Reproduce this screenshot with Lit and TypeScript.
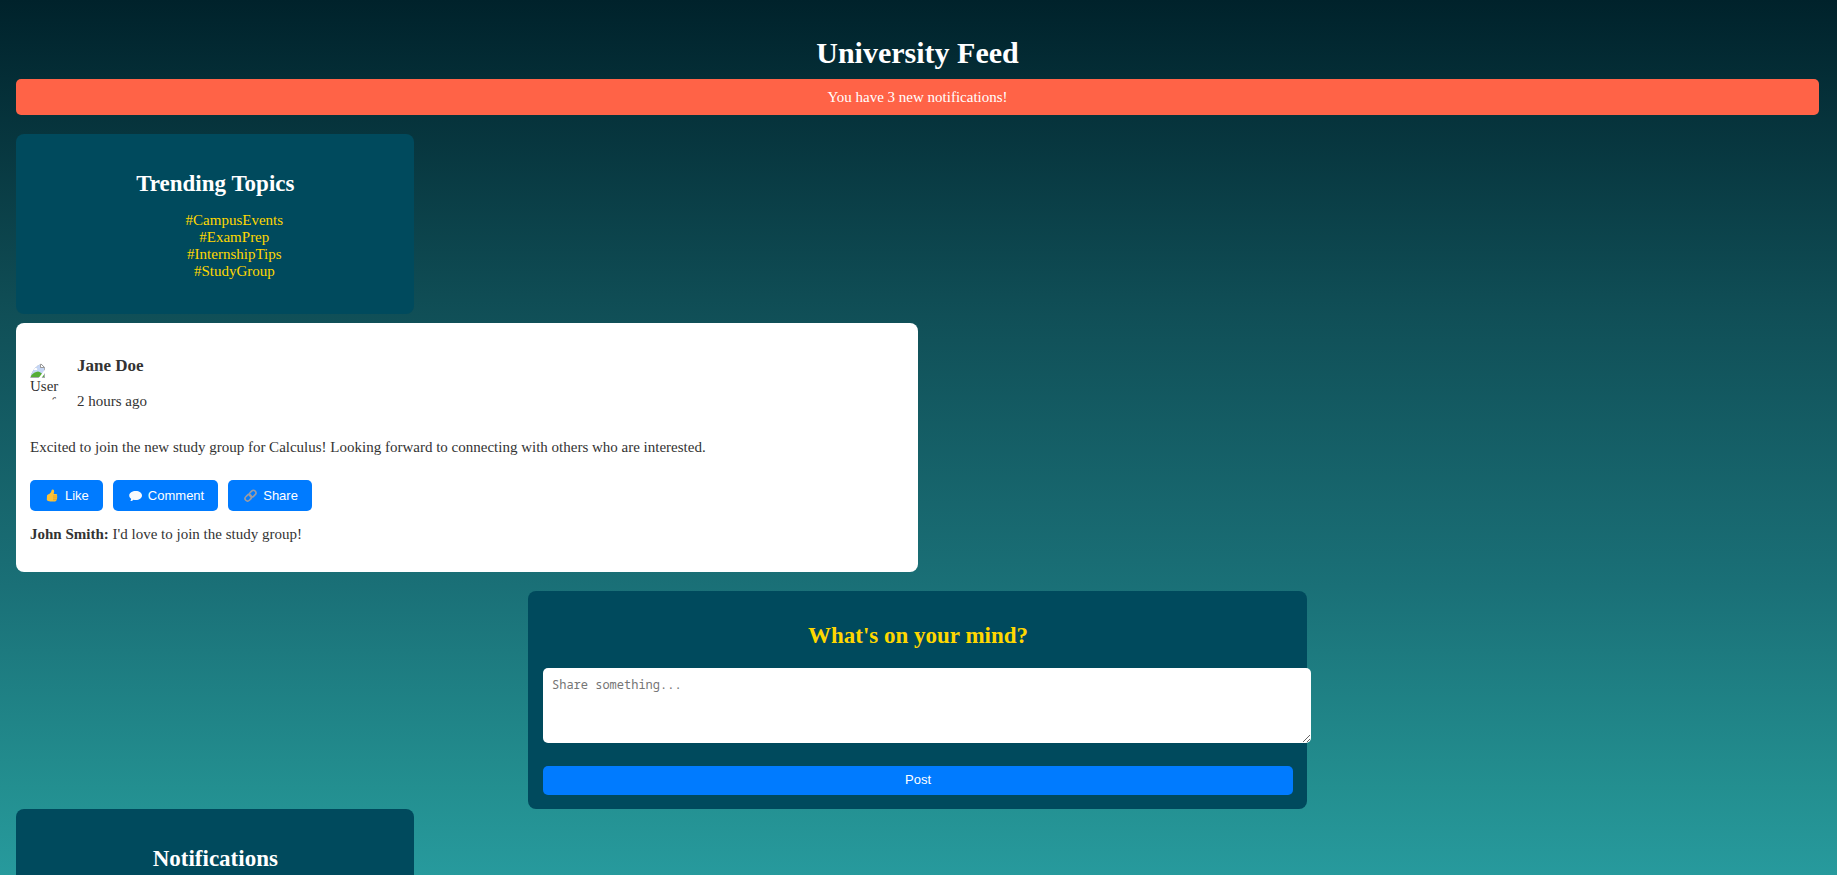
import { LitElement, html, css, svg } from "lit";
import { customElement } from "lit/decorators.js";

const thumbIcon = svg`
  <path d="M1 6.6 C1.8 5.6 3 5.2 3.8 4.6 C5 3.6 5.4 2.2 5.6 1.2 C5.8 .2 7.6 .2 8 1.6 C8.4 2.8 8 4 7.7 5 L10 5 C11.4 5.1 11.5 6.5 10.8 6.9 C11.6 7.4 11.5 8.6 10.8 8.8 C11.4 9.5 11.1 10.5 10.4 10.7 C10.7 11.6 10 12.4 8.8 12.4 L4.4 12.4 C2.8 12.4 1 11.8 .8 10.8 Z" fill="#fcc236"/>
  <path d="M7 7 H10.8 M7 8.9 H10.8 M7 10.7 H10.3" stroke="#d98f1c" stroke-width=".6" fill="none"/>
`;
const bubbleIcon = svg`
  <path d="M6.8 2 C10.3 2 13 3.9 13 6.5 C13 9.1 10.3 11 6.8 11 C6 11 5.2 10.9 4.5 10.7 C3.7 11.6 2.5 12.2 1.3 12.1 C1.9 11.4 2.2 10.6 2.1 9.7 C.9 8.9 .2 7.8 .2 6.5 C.2 3.9 3.3 2 6.8 2 Z" fill="#f8fafc"/>
`;
const linkIcon = svg`
  <g fill="none" stroke="#9b9ca3" stroke-width="1.6">
    <rect x="5.2" y="2.1" width="7" height="5" rx="2.5" transform="rotate(-45 8.7 4.6)"/>
    <rect x=".8" y="6.3" width="7" height="5" rx="2.5" transform="rotate(-45 4.3 8.8)"/>
  </g>
`;

@customElement("app-root")
export class AppRoot extends LitElement {
  static styles = css`
    :host {
      display: block;
      box-sizing: border-box;
      height: 100vh;
      padding: 36px 18px 0 16px;
      overflow-y: auto;
      scrollbar-width: none;
      background: linear-gradient(#00222b 0%, #104f57 36%, #1a7077 67%, #238f90 90%, #279a9d 100%);
      color: #fff;
      font: 15px/17px "Liberation Serif", "Times New Roman", serif;
      text-align: center;
    }
    h1, h2, h3, p, ul { margin: 0; }
    h1 { font-size: 30px; line-height: 34px; margin-bottom: 9px; }
    h2 { font-size: 23px; line-height: 26px; margin: 18px 0 15px; }
    h3 { font-size: 17px; line-height: 20px; }
    button {
      border: 0;
      border-radius: 5px;
      background: #007bff;
      color: #fff;
      font: 13px/15px "Liberation Sans", Arial, sans-serif;
      cursor: pointer;
    }
    .banner {
      padding: 9px;
      border-radius: 5px;
      background: #ff6347;
      line-height: 18px;
    }
    .panel {
      display: flow-root;
      width: 20%;
      padding: 19px 18px 19px 19px;
      border-radius: 8px;
      background: #004a5d;
    }
    .trending { margin-top: 19px; }
    .topics {
      padding-left: 38px;
      margin-bottom: 15px;
      list-style: none;
    }
    .topics a { color: #ffd700; text-decoration: none; }
    .post {
      box-sizing: border-box;
      width: 50%;
      margin-top: 9px;
      padding: 14px 14px 29px;
      border-radius: 8px;
      background: #fff;
      color: #333;
      text-align: left;
    }
    .author {
      display: flex;
      align-items: center;
      gap: 9px;
      margin-bottom: 14px;
    }
    .author-text {
      display: grid;
      gap: 17px;
      padding: 19px 0 15px;
    }
    .avatar {
      width: 38px;
      height: 38px;
      overflow: hidden;
      border-radius: 50%;
    }
    .avatar svg { display: block; }
    .actions {
      display: flex;
      gap: 10px;
      margin: 24px 0 15px;
    }
    .actions button {
      display: flex;
      align-items: center;
      gap: 6px;
      padding: 8px 14px 8px 16px;
    }
    .composer {
      display: flow-root;
      box-sizing: border-box;
      max-width: 779px;
      margin: 19px auto 0;
      padding: 14px 14px 14px 15px;
      border-radius: 8px;
      background: #004a5d;
    }
    .composer h2 { margin-bottom: 19px; color: #ffd700; }
    .composer textarea {
      display: block;
      width: 100%;
      height: 57px;
      margin-bottom: 23px;
      padding: 9px;
      border: 0;
      border-radius: 5px;
      background: #fff;
      font: 12px/15px "Noto Sans Mono", "DejaVu Sans Mono", monospace;
    }
    .composer textarea::placeholder { color: #757575; }
    .composer button {
      display: block;
      width: 100%;
      padding: 6px 9px 8px;
    }
  `;

  private topics = ["#CampusEvents", "#ExamPrep", "#InternshipTips", "#StudyGroup"];
  private actions = [
    { label: "Like", icon: thumbIcon },
    { label: "Comment", icon: bubbleIcon },
    { label: "Share", icon: linkIcon },
  ];

  render() {
    return html`
      <h1>University Feed</h1>
      <div class="banner" role="status">You have 3 new notifications!</div>

      <section class="panel trending">
        <h2>Trending Topics</h2>
        <ul class="topics">
          ${this.topics.map((t) => html`<li><a href="#">${t}</a></li>`)}
        </ul>
      </section>

      <article class="post">
        <header class="author">
          <div class="avatar">
            <svg width="15" height="16" viewBox="0 0 15 16" aria-hidden="true">
              <path d="M0 1 H10.5 L15 5.5 V16 H0 Z" fill="#a6aab0"/>
              <path d="M1 2 H10 V6 H14 V15 H1 Z" fill="#c5d6f5"/>
              <path d="M10.5 1.5 V5.5 H14.5 Z" fill="#fff" stroke="#999" stroke-width="1"/>
              <path d="M3 7 C3.2 5.4 5 5 5.8 6 C7.2 5.8 7.8 7.5 6.8 8 H3.4 Z" fill="#fff"/>
              <path d="M1 15 V13.8 C3 11.4 5.4 9.8 8 9.6 C10 9.8 12.5 12 14 13.4 V15 Z" fill="#56ad36"/>
              <path d="M8.6 16 L15 7.6 V11 L11.6 16 Z" fill="#fff"/>
            </svg>
            User Profile
          </div>
          <div class="author-text">
            <h3>Jane Doe</h3>
            <p>2 hours ago</p>
          </div>
        </header>
        <p>Excited to join the new study group for Calculus! Looking forward to connecting with others who are interested.</p>
        <div class="actions">
          ${this.actions.map(
            (a) => html`<button type="button">
              <svg width="13" height="13" viewBox="0 0 13 13" aria-hidden="true">${a.icon}</svg>${a.label}
            </button>`
          )}
        </div>
        <p><strong>John Smith:</strong> I'd love to join the study group!</p>
      </article>

      <section class="composer">
        <h2 id="composer-title">What's on your mind?</h2>
        <textarea aria-labelledby="composer-title" placeholder="Share something..."></textarea>
        <button type="button">Post</button>
      </section>

      <section class="panel">
        <h2>Notifications</h2>
      </section>
    `;
  }
}
